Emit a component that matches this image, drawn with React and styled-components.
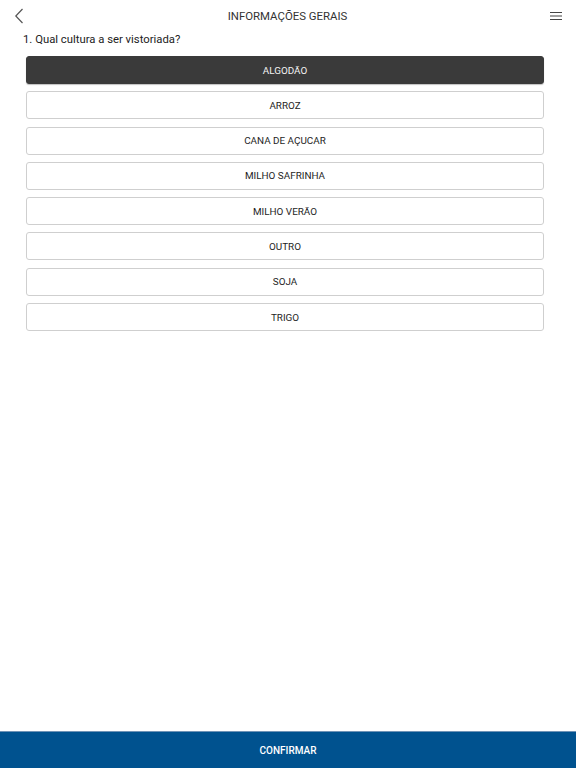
import React, { useState } from 'react';
import styled, { createGlobalStyle } from 'styled-components';

const GlobalStyle = createGlobalStyle`
    html, body {
        margin: 0;
        padding: 0;
        background: #ffffff;
        font-family: Roboto, 'Liberation Sans', sans-serif;
    }
`;

const options = [
    'ALGODÃO',
    'ARROZ',
    'CANA DE AÇUCAR',
    'MILHO SAFRINHA',
    'MILHO VERÃO',
    'OUTRO',
    'SOJA',
    'TRIGO',
];

const Styled = {
    Page: styled.div`
        display: flex;
        flex-direction: column;
        height: 768px;
        width: 576px;
        background: #fff;
    `,
    Header: styled.header`
        display: flex;
        align-items: center;
        justify-content: space-between;
        height: 31px;
        padding: 0 13px 0 12px;
        color: #333;
    `,
    IconButton: styled.button`
        display: flex;
        align-items: center;
        justify-content: center;
        width: 14px;
        height: 20px;
        padding: 0;
        border: none;
        background: none;
        cursor: pointer;
    `,
    Title: styled.h1`
        margin: 0;
        font-size: 11.4px;
        font-weight: 400;
        color: #333;
    `,
    Content: styled.main`
        flex: 1;
        padding: 0 32px 0 26px;
    `,
    Question: styled.p`
        margin: 1px 0 9px -3px;
        font-size: 11.3px;
        line-height: 15px;
        color: #222;
    `,
    Options: styled.div`
        display: flex;
        flex-direction: column;
        gap: 7.3px;
    `,
    Option: styled.button`
        height: 28px;
        width: 100%;
        border-radius: 3px;
        border: 1px solid ${({ selected }) => (selected ? '#3a3a3a' : '#cfcfcf')};
        background: ${({ selected }) => (selected ? '#3a3a3a' : '#fff')};
        color: ${({ selected }) => (selected ? '#f2f2f2' : '#1e1e1e')};
        font-family: Roboto, 'Liberation Sans', sans-serif;
        font-size: 9.9px;
        cursor: pointer;
        box-shadow: ${({ selected }) => (selected ? '0 1px 1px rgba(0,0,0,0.25)' : 'none')};
    `,
    Footer: styled.button`
        height: 37px;
        width: 100%;
        border: none;
        border-top: 1px solid #6f93b6;
        background: #00528f;
        color: #fff;
        font-family: Roboto, 'Liberation Sans', sans-serif;
        font-size: 10px;
        font-weight: 500;
        cursor: pointer;
    `,
};

function App() {
    const [selected, setSelected] = useState('ALGODÃO');

    return (
        <Styled.Page>
            <GlobalStyle />
            <Styled.Header>
                <Styled.IconButton aria-label="voltar">
                    <svg width="10" height="16" viewBox="0 0 10 16">
                        <path d="M8.5 1 L1.8 8 L8.5 15" fill="none" stroke="#555" strokeWidth="1.2" />
                    </svg>
                </Styled.IconButton>
                <Styled.Title>INFORMAÇÕES GERAIS</Styled.Title>
                <Styled.IconButton aria-label="menu">
                    <svg width="12" height="10" viewBox="0 0 12 10">
                        <path d="M0 1.5 H12 M0 5 H12 M0 8.5 H12" stroke="#444" strokeWidth="1.2" />
                    </svg>
                </Styled.IconButton>
            </Styled.Header>
            <Styled.Content>
                <Styled.Question>1. Qual cultura a ser vistoriada?</Styled.Question>
                <Styled.Options>
                    {options.map((o) => (
                        <Styled.Option
                            key={o}
                            selected={o === selected}
                            onClick={() => setSelected(o)}
                        >
                            {o}
                        </Styled.Option>
                    ))}
                </Styled.Options>
            </Styled.Content>
            <Styled.Footer>CONFIRMAR</Styled.Footer>
        </Styled.Page>
    );
}

export default App;
